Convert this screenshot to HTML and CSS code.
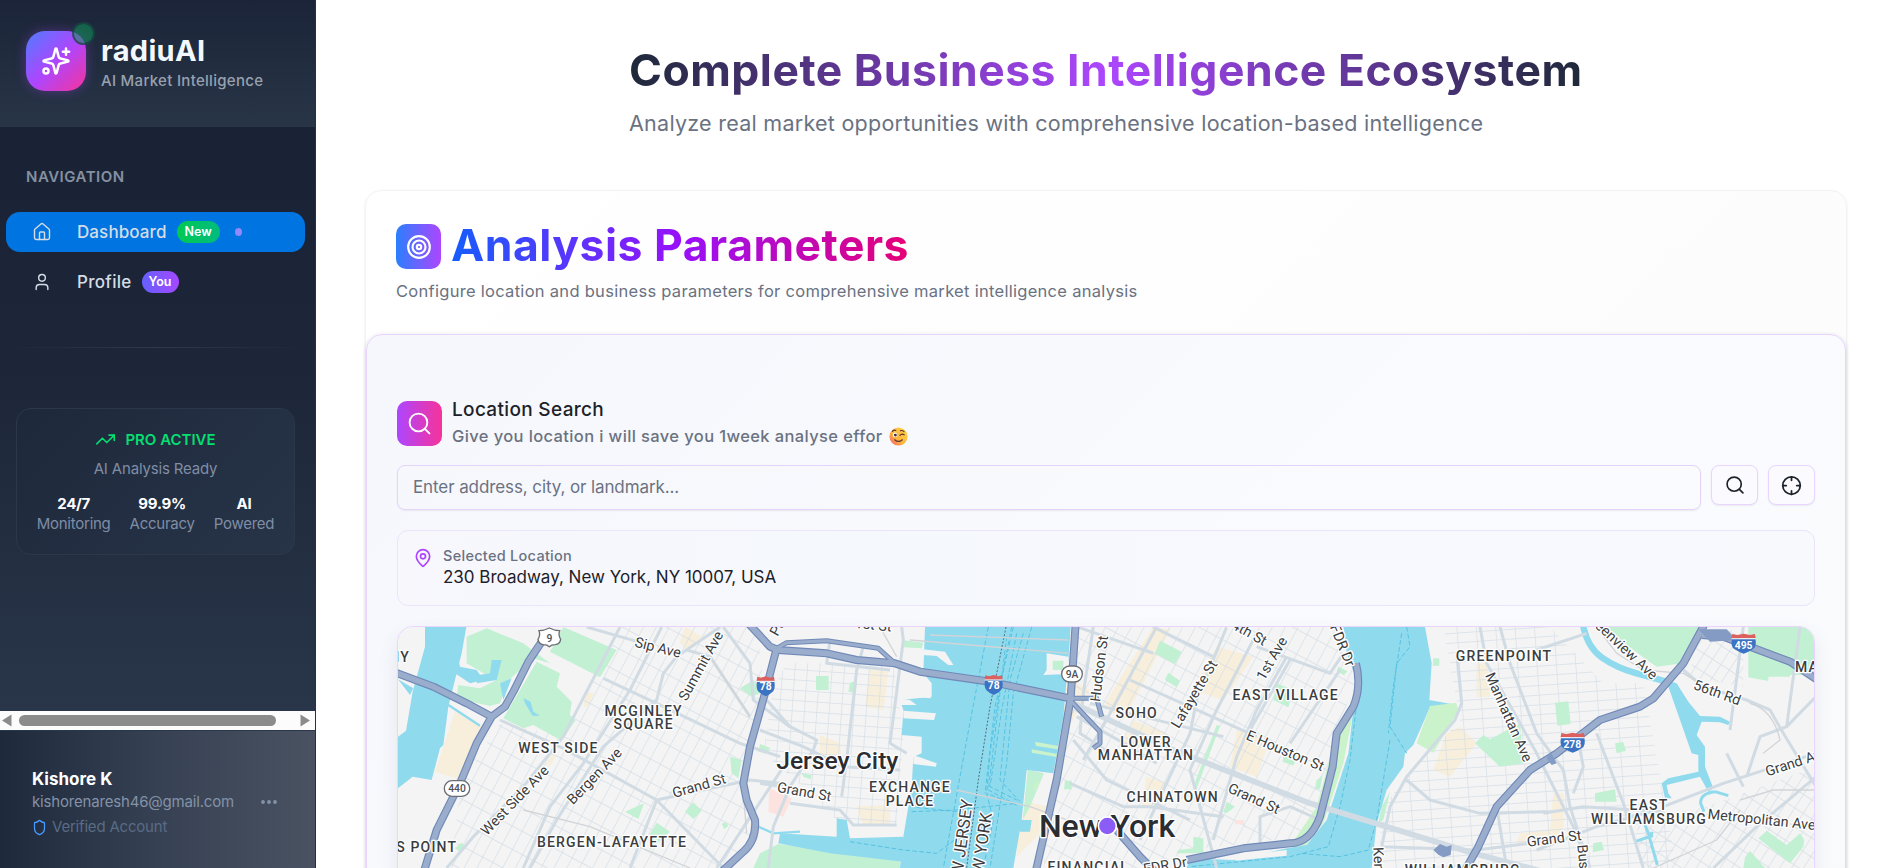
FILE: index.html
```
<!DOCTYPE html>
<html lang="en">
<head>
  <meta charset="UTF-8" />
  <meta name="viewport" content="width=device-width, initial-scale=1" />
  <title>radiuAI - Dashboard</title>
  <link rel="stylesheet" href="styles.css">
</head>
<body>

<aside class="sidebar">
  <div class="brand">
    <div class="brand-logo">
      <svg viewBox="0 0 24 24" width="30" height="30" class="icon"><path d="M9.937 15.5A2 2 0 0 0 8.5 14.063l-6.135-1.582a.5.5 0 0 1 0-.962L8.5 9.936A2 2 0 0 0 9.937 8.5l1.582-6.135a.5.5 0 0 1 .963 0L14.063 8.5A2 2 0 0 0 15.5 9.937l6.135 1.581a.5.5 0 0 1 0 .964L15.5 14.063a2 2 0 0 0-1.437 1.437l-1.582 6.135a.5.5 0 0 1-.963 0z"/><path d="M20 2v5M22.500 4.500h-5"/><circle cx="4" cy="20" r="2"/></svg>
      <span class="brand-status"></span>
    </div>
    <div>
      <div class="brand-name">radiuAI</div>
      <div class="brand-sub">AI Market Intelligence</div>
    </div>
  </div>

  <nav class="nav">
    <div class="nav-label">NAVIGATION</div>
    <a class="nav-item active">
      <svg viewBox="0 0 24 24" width="20" height="20" class="icon"><path d="M15 21v-8a1 1 0 0 0-1-1h-4a1 1 0 0 0-1 1v8"/><path d="M3 10a2 2 0 0 1 .709-1.528l7-5.999a2 2 0 0 1 2.582 0l7 5.999A2 2 0 0 1 21 10v9a2 2 0 0 1-2 2H5a2 2 0 0 1-2-2z"/></svg>
      <span class="nav-text">Dashboard</span>
      <span class="badge badge-new">New</span>
      <span class="nav-dot"></span>
    </a>
    <a class="nav-item">
      <svg viewBox="0 0 24 24" width="20" height="20" class="icon"><path d="M19 21v-2a4 4 0 0 0-4-4H9a4 4 0 0 0-4 4v2"/><circle cx="12" cy="7" r="4"/></svg>
      <span class="nav-text profile">Profile</span>
      <span class="badge badge-you">You</span>
    </a>
    <div class="nav-divider"></div>

    <div class="plan">
      <div class="plan-title">
        <svg viewBox="0 0 24 24" width="21" height="21" class="icon"><path d="M22 7l-8.5 8.5-5-5L2 17"/><path d="M16 7h6v6"/></svg>
        <span>PRO ACTIVE</span>
      </div>
      <div class="plan-sub">AI Analysis Ready</div>
      <div class="plan-stats">
        <div class="stat"><b>24/7</b><span>Monitoring</span></div>
        <div class="stat"><b>99.9%</b><span>Accuracy</span></div>
        <div class="stat"><b>AI</b><span>Powered</span></div>
      </div>
    </div>
  </nav>

  <div class="hscroll">
    <svg viewBox="0 0 10 12" width="10" height="13"><path d="M9.500 0v12L0 6z"/></svg>
    <div class="hscroll-thumb"></div>
    <svg viewBox="0 0 10 12" width="10" height="13"><path d="M.5 0v12L10 6z"/></svg>
  </div>

  <div class="account">
    <div>
      <div class="account-name">Kishore K</div>
      <div class="account-mail">kishorenaresh46@gmail.com</div>
      <div class="account-verified">
        <svg viewBox="0 0 24 24" width="15" height="17" class="icon" preserveAspectRatio="none"><path d="M20 13c0 5-3.500 7.500-7.660 8.950a1 1 0 0 1-.67-.01C7.500 20.500 4 18 4 13V6a1 1 0 0 1 1-1c2 0 4.500-1.200 6.240-2.720a1.170 1.170 0 0 1 1.520 0C14.510 3.810 17 5 19 5a1 1 0 0 1 1 1z"/></svg>
        <span>Verified Account</span>
      </div>
    </div>
    <svg viewBox="0 0 16 4" width="16" height="4" class="account-more"><circle cx="2" cy="2" r="1.900"/><circle cx="8" cy="2" r="1.900"/><circle cx="14" cy="2" r="1.900"/></svg>
  </div>
</aside>

<main class="main">
  <div class="hero">
    <h1 class="hero-title">Complete Business Intelligence Ecosystem</h1>
    <p class="hero-sub">Analyze real market opportunities with comprehensive location-based intelligence</p>
  </div>

  <section class="card">
    <div class="card-head">
      <div class="card-row">
        <div class="tile tile-blue">
          <svg viewBox="0 0 24 24" width="26" height="26" class="icon"><circle cx="12" cy="12" r="10"/><circle cx="12" cy="12" r="6"/><circle cx="12" cy="12" r="2"/></svg>
        </div>
        <h2 class="card-title">Analysis Parameters</h2>
      </div>
      <p class="card-desc">Configure location and business parameters for comprehensive market intelligence analysis</p>
    </div>

    <div class="panel">
      <div class="panel-head">
        <div class="tile tile-pink">
          <svg viewBox="0 0 24 24" width="25" height="25" class="icon"><circle cx="11" cy="11" r="8.500"/><path d="M21.500 21.500l-4.300-4.300"/></svg>
        </div>
        <div>
          <div class="panel-title">Location Search</div>
          <div class="panel-sub">
            <span>Give you location i will save you 1week analyse effor</span>
            <svg viewBox="0 0 20 20" width="19" height="19">
              <defs><linearGradient id="face" x1="1" y1="0" x2="0" y2="1"><stop offset="0" stop-color="#ffd84a"/><stop offset=".6" stop-color="#fdb33c"/><stop offset="1" stop-color="#f4556a"/></linearGradient></defs>
              <circle cx="10" cy="10" r="9.500" fill="url(#face)"/>
              <ellipse cx="6.300" cy="8.300" rx="2.300" ry="2.600" fill="#fff"/>
              <circle cx="6.700" cy="8.500" r="1.500" fill="#402a32"/>
              <path d="M11.500 8.800q2-2.400 4.500-.6M3.500 4.600q1.800-1.800 3.600-1M12 4q2-.8 3.800.8M6 13.400q4 3.600 8 0" fill="none" stroke="#5b3136" stroke-width="1.200" stroke-linecap="round"/>
            </svg>
          </div>
        </div>
      </div>

      <div class="search-row">
        <div class="search-input">Enter address, city, or landmark...</div>
        <button class="icon-btn"><svg viewBox="0 0 24 24" width="20" height="20" class="icon"><circle cx="11" cy="11" r="8.500"/><path d="M21.500 21.500l-4.300-4.300"/></svg></button>
        <button class="icon-btn"><svg viewBox="0 0 24 24" width="21" height="21" class="icon"><circle cx="12" cy="12" r="10"/><path d="M22 12h-4M6 12H2M12 6V2M12 22v-4"/></svg></button>
      </div>

      <div class="selected">
        <svg viewBox="0 0 24 24" width="20" height="20" class="icon"><path d="M20 10c0 4.993-5.539 10.193-7.399 11.799a1 1 0 0 1-1.202 0C9.539 20.193 4 14.993 4 10a8 8 0 0 1 16 0"/><circle cx="12" cy="10" r="3"/></svg>
        <div>
          <div class="selected-label">Selected Location</div>
          <div class="selected-value">230 Broadway, New York, NY 10007, USA</div>
        </div>
      </div>

      <div class="map">
        <svg class="map-svg" viewBox="24 21 4254 723" preserveAspectRatio="xMinYMin slice">
          <defs>
            <pattern id="grid-jc" width="34" height="62" patternUnits="userSpaceOnUse" patternTransform="rotate(28)"><path d="M0 0V62M0 0H34" class="minor"/></pattern>
            <pattern id="grid-dt" width="37" height="31" patternUnits="userSpaceOnUse" patternTransform="rotate(4)"><path d="M0 0V31M0 0H37" class="minor"/></pattern>
            <pattern id="grid-mn" width="34" height="66" patternUnits="userSpaceOnUse" patternTransform="rotate(28)"><path d="M0 0V66M0 0H34" class="minor"/></pattern>
            <pattern id="grid-gp" width="58" height="29" patternUnits="userSpaceOnUse" patternTransform="rotate(-4)"><path d="M0 0V29M0 0H58" class="minor"/></pattern>
            <pattern id="grid-wb" width="30" height="48" patternUnits="userSpaceOnUse" patternTransform="rotate(33)"><path d="M0 0V48M0 0H30" class="minor"/></pattern>
            <g id="interstate">
              <path d="M-26-14Q-30 10-20 18Q-10 27 0 31Q10 27 20 18Q30 10 26-14z" fill="#3b73c4"/>
              <path d="M-27-15L-25-28L-14-25L0-29L14-25L25-28L27-15z" fill="#db605e"/>
              <path d="M-27-14H27" stroke="#fff" stroke-width="3"/>
            </g>
            <g id="hw">
              <path d="M10 155L130 200L230 250L305 290M455 65L415 125L370 215L345 260L305 290L260 370L210 490L140 630L100 760"/>
              <path d="M1075 10L1140 80L1165 90L1310 100L1400 120L1515 130L1590 155L1800 185L2040 235"/>
              <path d="M1160 85L1125 220L1080 380L1060 490L1070 540L1095 600Q1100 660 1060 695L990 760"/>
              <path d="M2057 10L2042 235L2000 480L1936 760"/>
              <path d="M2898 130Q2915 200 2890 260L2840 340L2828 440L2790 590Q2760 670 2700 670L2560 685L2390 720M2180 630L2250 710L2300 760"/>
              <path d="M3945 10L3880 130L3790 235L3750 260L3630 300L3500 400L3420 450L3320 560L3265 680L3220 760"/>
              <path d="M3935 45L4000 50L4080 80L4200 125L4290 185"/>
            </g>
            <g id="ramps">
              <path d="M1160 85L1190 68L1310 62L1465 85L1515 130M2040 235L2120 235L2135 290M2045 245L2130 335L2130 370L2110 385"/>
            </g>
          </defs>
          <rect width="4300" height="760" fill="#f4f4f4"/>

          <!-- commercial blocks -->
          <g class="sand">
            <path d="M195 275L278 318L205 478L135 455L160 380z"/>
            <path d="M590 215L612 222L590 262L580 258zM485 400L497 408L478 442L468 436zM870 70L885 20L935 50L890 90z"/>
            <path d="M1440 150L1495 155L1480 270L1425 260zM1290 345L1350 370L1355 420L1290 400zM1400 560L1500 555L1500 610L1420 615z"/>
            <path d="M1910 545L1975 560L1950 640L1880 710L1885 650z"/>
            <path d="M2290 20L2340 30L2260 190L2200 300L2140 260L2200 160zM2480 80L2590 110L2500 240L2410 210zM2540 330L2640 360L2600 470L2520 440zM2230 300L2330 340L2300 400L2200 370zM2270 470L2330 490L2310 560L2255 560zM2040 180L2100 210L2030 330L2000 250z"/>
            <path d="M3170 340L3210 320L3260 370L3180 470L3130 450zM3260 130L3290 130L3300 230L3260 230zM3490 520L3520 520L3520 620L3480 680L3380 670L3390 640L3480 630z"/>
          </g>

          <!-- street grids -->
          <path fill="url(#grid-jc)" d="M690 20H1100L1125 230L1060 480L1090 660L980 744H180L215 480L330 310L530 350z"/>
          <path fill="url(#grid-dt)" d="M1190 130H1510L1540 350L1520 620L1350 610L1240 500L1120 400L1150 200z"/>
          <path fill="url(#grid-mn)" d="M2070 20H2830L2900 170L2840 340L2790 560L2740 650L2400 690L2290 744H1960L1990 480z"/>
          <path fill="url(#grid-gp)" d="M3160 20H3480L3640 190L3760 190L3860 744H2960L2980 560L3050 470L3210 300z"/>
          <path fill="url(#grid-wb)" d="M3740 600L3950 560L4278 440V744H3750zM3920 30H4060V200L3900 170z"/>

          <!-- parks -->
          <g class="park">
            <path d="M230 50L290 25L400 70L480 130L430 115L340 195L230 130z"/>
            <path d="M520 21L680 90L630 172L480 95z"/>
            <path d="M440 125L510 160L500 200L545 245L540 285L557 300L515 362L430 315L400 325L340 295z"/>
            <path d="M205 195L270 205L320 180L345 210L330 250L300 258L200 235z"/>
            <path d="M1050 205L1090 180L1120 215L1085 230zM1020 410L1055 420L1045 475L1025 460zM1110 372L1142 385L1125 400L1105 395zM705 575L762 550L745 597zM885 575L910 547L935 573L910 597zM775 650L800 608L840 635L780 690zM195 685L215 668L230 682L213 697zM995 612L1008 605L1015 618L1003 627z"/>
            <path d="M1278 168H1316V210H1278zM1380 188L1400 182L1398 220L1375 215zM1535 60L1600 68L1595 85L1540 82zM1090 744L1110 700L1165 672L1530 720V744z"/>
            <path d="M1913 450L1962 460L1920 560L1898 600zM2025 482L2045 482L2045 508H2022zM1235 460L1265 466L1262 478L1240 470z"/>
            <path d="M2310 62L2375 95L2355 132L2295 100zM2335 158L2370 182L2360 202L2325 180zM2660 190L2710 210L2695 262L2650 240zM2845 140L2872 154L2862 166L2840 154zM2780 480L2798 466L2790 508H2775zM2680 405L2715 425L2710 437L2678 425zM2480 315L2490 318L2420 505L2410 500zM2510 545L2535 560L2510 580L2500 575zM2410 650L2440 655V700H2360L2365 690L2410 685z"/>
            <path d="M2893 260L2860 430L2800 610L2740 685L2700 680L2780 560L2840 340z" fill="#caf2cb"/>
            <path d="M3000 515L2980 600L2965 610L2975 560zM3130 115H3148V137H3128zM3255 370L3280 345L3300 358L3390 310L3400 430L3330 440z"/>
            <path d="M3640 21H3930L3880 130L3800 140L3770 120zM3495 248L3535 244L3542 312L3502 317zM3675 370L3700 366L3708 392L3680 400zM3615 520L3675 508L3680 545L3615 545zM4075 21H4270L4278 60V165H4200V170H4135V183L4075 172zM4105 655L4130 632L4190 675L4230 640L4243 660L4240 680L4200 730zM4065 712L4080 692L4125 744H4060zM3610 670L3635 665L3642 690L3608 697z"/>
          </g>

          <!-- water -->
          <g class="water">
            <path d="M105 21H229L215 100L175 260L160 375L150 385L125 480L68 470L24 505V350L48 332L68 215L105 80z"/>
            <path d="M24 178L70 205L60 225zM185 110L205 118L210 140L260 150L280 180L240 190L180 150zM305 120H335L320 180L260 190L265 165L300 160zM400 235L422 245L430 275L450 287L428 287L405 250zM330 190L365 175L340 240z"/>
            <path d="M1605 21H2042L2036 110L2020 290L1990 460L1910 450L1895 600L1870 744H1530L1540 650L1565 500L1570 410L1595 400V350L1535 345L1540 270L1530 240L1625 230V190L1600 160z"/>
            <path d="M1170 640L1340 650V595L1370 600L1380 655L1540 650V725L1320 700L1165 670zM1885 600H1925L1920 635H1890z"/>
            <path d="M2860 21H3105L3125 130L3118 240L3200 255L3192 280L3120 262L3070 375L3045 400L3040 440L2990 510L2960 610L2945 744H2390L2400 715L2530 720L2690 685L2750 675L2810 600L2875 400L2900 180L2870 100z"/>
            <path d="M3828 180L3860 190L3895 245L3930 288L3990 290L4020 305L4015 315L3990 307L3935 305L3920 345L3945 380L3945 440L3970 505L3955 515L3930 470L3830 495L3835 520L3845 535L3825 535L3815 490L3835 475L3925 455L3925 405L3905 400z"/>
          </g>
          <g class="creek">
            <path d="M3578 10Q3590 80 3635 112T3740 160T3845 190" stroke-width="19"/>
            <path d="M3975 515Q3930 520 3932 550L3942 575M3975 515L4015 527M3765 615L3775 640L3802 735M3735 665L3785 648L3785 635" stroke-width="9"/>
            <path d="M175 255L270 317M1105 620L1150 640L1230 635" stroke-width="7"/>
          </g>
          <!-- piers -->
          <path fill="#f4f4f4" d="M1598 88L1665 95L1690 135L1675 135L1640 108L1600 105zM1540 272L1638 280L1632 300L1540 295zM1570 405L1640 430L1638 440L1570 432zM1600 170L1622 190V235L1585 232zM1520 235L1560 240L1580 255L1520 255zM2535 708L2690 690V707L2537 722zM1970 100L2035 110V162L1960 165L1970 150z"/>
          <path class="park" d="M1988 122H2020V150H1988z"/>
          <path fill="#caf2cb" d="M3120 258L3198 248L3206 272L3170 330L3130 398L3080 370zM1935 365L2005 378L2003 388L1938 378zM1925 388L2003 402L2003 412L1925 398zM1940 482L1950 488L1935 515L1930 500z"/>
          <path fill="#fde3e0" d="M1138 505L1205 535L1180 590L1135 575zM2535 600H2562V613H2535z"/>

          <!-- ferry routes -->
          <g class="ferry">
            <path d="M1795 21L1730 360L1660 744M1865 21L1830 200L1800 400L1790 520L1810 600L1780 744M1870 21L1815 260L1785 520M1880 40L1835 270L1800 500L1880 540M1900 40L1860 180L1830 480L1890 545M1925 21L1870 220L1850 430L1800 744"/>
            <path d="M1850 50L1795 510L1880 555L1790 520M1565 575L1700 570L1880 550M1380 665L1540 690L1640 700L1720 640M1560 560L1700 575"/>
            <path d="M3050 21L3060 80L3020 130L3000 320L3050 400M3035 40L3010 200L2995 340M2900 250L2880 420L2850 560L2815 680L2700 710L2400 740M3000 360L2960 600L2935 690L2850 710L2730 700"/>
          </g>
          <path class="border-line" d="M1848 21L1800 260L1765 480L1730 744"/>

          <!-- secondary roads -->
          <g class="road">
            <path d="M590 21L690 50L780 75M690 21L520 350L400 500L250 650L170 744M815 21L720 210L580 430L480 560L400 744M990 21L860 110L820 160L800 240L640 380L500 600L420 744"/>
            <path d="M330 300L520 385L800 540L1000 744M640 175L800 250L1050 370L1170 410M800 540L1080 480M980 744L1200 410M800 540L720 744M1000 21L1080 130L1090 240L1200 320M890 90L960 110L1080 290M1080 480L1170 490"/>
            <path d="M1320 60L1310 130L1410 140L1500 150M1535 21L1540 60L1500 370L1550 400M1420 80L1400 150L1370 420L1355 530M1110 330L1240 380L1360 440L1530 450M1130 240L1200 320L1280 360L1270 390L1200 500L1150 620L1135 744M1110 490L1180 500M1200 550L1350 570L1390 615L1520 615"/>
            <path d="M2060 20L2290 100M2290 21L2470 110M2100 250L2500 350M2220 180L2600 350M2050 360L2150 480L2400 600M2300 430L2220 380L2060 290M2600 80L2820 160L2860 100M2690 110L2600 270L2540 410L2470 660M2510 21L2420 240L2400 340L2250 660M2600 40L2480 270L2400 450L2480 744M2700 120L2580 330M2850 150L2700 370M2300 20L2160 280L2080 420M2110 21L2080 220L2070 340L2160 400"/>
            <path d="M2610 670L2610 590L2700 560L2790 600M2040 490L2200 560L2280 560L2500 590"/>
            <path d="M3270 21L3290 130L3440 400L3510 540L3560 640L3590 744M3330 21L3360 130L3440 340M3200 100L3215 250L3195 300L3050 470L3000 560L2975 680M3050 480L3120 540L3270 580L3470 575M2980 680L3260 690L3500 660M3320 560L3350 744M3440 340L3520 450L3540 560L3600 744M3620 340L3700 550L3760 744"/>
            <path d="M3820 560L4000 490L4278 400M3440 690L3620 620L3800 570M3460 580L3580 560L3820 575M3880 150L3940 200L4070 240L4140 270L4180 340L4278 500M4060 20L4020 330M4230 21L4190 320L4278 230M4190 320L4110 350L4070 470M4278 470L4100 620L3970 744M4010 400L4060 500M3440 90L3590 40M3560 340L3580 440L3550 520"/>
          </g>
          <path class="road wide" d="M2050 250L2350 390L2760 550L3250 700L3480 760"/>
          <path class="rail" d="M960 110L1080 290M1060 520L1070 640M400 570L600 620L900 744M3620 21L3680 100L3760 150L3880 160L3930 190M4080 250Q4150 270 4170 360L4120 400M4050 540L4150 510L4278 510M3790 744L3980 660L4050 570M1560 60L2040 100M1620 45L2035 60M1700 510L1920 560L2060 610M1470 21L1520 110"/>

          <!-- highways -->
          <use href="#ramps" class="ramp-edge"/>
          <use href="#hw" class="hw-edge"/>
          <use href="#ramps" class="ramp-fill"/>
          <use href="#hw" class="hw-fill"/>
          <path fill="#849bc3" d="M3130 690L3150 672L3170 680L3185 675L3182 705L3160 712L3145 704zM3925 28H4010L4040 60L3960 65zM3470 415L3482 395L3500 430L3485 435z"/>

          <!-- shields -->
          <use href="#interstate" x="1127" y="198"/><use href="#interstate" x="1811" y="194"/>
          <use href="#interstate" transform="translate(3548 367) scale(1.35 1)"/><use href="#interstate" transform="translate(4061 70) scale(1.35 1)"/>
          <g fill="#fff" stroke="#6b6f74" stroke-width="4">
            <path d="M447 32Q462 32 478 24Q494 32 509 32Q504 45 512 58Q510 72 496 74Q484 74 478 80Q472 74 460 74Q446 72 444 58Q452 45 447 32z"/>
            <rect x="163" y="482" width="76" height="47" rx="23"/>
            <rect x="2015" y="138" width="62" height="48" rx="24"/>
          </g>
          <g class="shield-text">
            <text x="478" y="65">9</text><text x="201" y="517">440</text><text x="2046" y="174">9A</text>
            <g fill="#fff" font-weight="700"><text x="1127" y="211">78</text><text x="1811" y="207">78</text><text x="3547" y="383">278</text><text x="4061" y="86">495</text></g>
          </g>

          <!-- labels -->
          <g class="area">
            <text x="-2" y="125" class="start">NY</text>
            <text x="761" y="287">MCGINLEY</text><text x="761" y="327">SQUARE</text>
            <text x="505" y="398">WEST SIDE</text><text x="666" y="680">BERGEN-LAFAYETTE</text>
            <text x="110" y="697">S POINT</text>
            <text x="1560" y="516">EXCHANGE</text><text x="1560" y="558">PLACE</text>
            <text x="2240" y="293">SOHO</text><text x="2268" y="380">LOWER</text><text x="2268" y="420">MANHATTAN</text>
            <text x="2348" y="545">CHINATOWN</text><text x="2687" y="239">EAST VILLAGE</text>
            <text x="2095" y="757">FINANCIAL</text><text x="3218" y="765">WILLIAMSBURG</text>
            <text x="3342" y="122">GREENPOINT</text>
            <text x="3777" y="571">EAST</text><text x="3777" y="612">WILLIAMSBURG</text>
            <text x="4215" y="155" class="start">MASPETH</text>
          </g>
          <g class="street">
            <text transform="translate(804 82) rotate(14)">Sip Ave</text>
            <text transform="translate(932 137) rotate(-61)">Summit Ave</text>
            <text transform="translate(374 541) rotate(-46)">West Side Ave</text>
            <text transform="translate(613 468) rotate(-46)">Bergen Ave</text>
            <text transform="translate(927 497) rotate(-16)">Grand St</text>
            <text transform="translate(1243 515) rotate(10)">Grand St</text>
            <text transform="translate(1450 14) rotate(6)">1st St</text>
            <text transform="translate(1162 22) rotate(-60)">Pa</text>
            <text transform="translate(2127 146) rotate(-83)">Hudson St</text>
            <text transform="translate(2412 222) rotate(-59)">Lafayette St</text>
            <text transform="translate(2568 32) rotate(29)">14th St</text>
            <text transform="translate(2645 115) rotate(-60)">1st Ave</text>
            <text transform="translate(2858 76) rotate(68)">FDR Dr</text>
            <text transform="translate(2686 392) rotate(23)">E Houston St</text>
            <text transform="translate(2592 535) rotate(24)">Grand St</text>
            <text transform="translate(2325 736) rotate(-10)">FDR Dr</text>
            <text transform="translate(3357 291) rotate(66)">Manhattan Ave</text>
            <text transform="translate(3694 75) rotate(43)">Greenview Ave</text>
            <text transform="translate(3982 217) rotate(20)">56th Rd</text>
            <text transform="translate(4220 425) rotate(-18)">Grand Ave</text>
            <text transform="translate(4115 598) rotate(6)">Metropolitan Ave</text>
            <text transform="translate(3492 655) rotate(-7)">Grand St</text>
            <text transform="translate(2968 765) rotate(88)">Kent Ave</text>
            <text transform="translate(3585 765) rotate(85)">Bushwick</text>
            <text class="state" transform="translate(1712 685) rotate(-82)">NEW JERSEY</text>
            <text class="state" transform="translate(1772 700) rotate(-82)">NEW YORK</text>
          </g>
          <text class="city" x="1342" y="448" font-size="74">Jersey City</text>
          <text class="city" x="2151" y="652" font-size="96">New York</text>
          <circle cx="2152" cy="618" r="27" fill="#8b5cf6" stroke="#fff" stroke-width="5"/>
        </svg>
      </div>
    </div>
  </section>
</main>

</body>
</html>
```
FILE: styles.css
```
* {
  box-sizing: border-box;
}

body {
  margin: 0;
  display: flex;
  height: 868px;
  overflow: hidden;
  background: #fff;
  font-family: Inter, 'Liberation Sans', sans-serif;
  color: #1d2129;
}

h1, h2, p {
  margin: 0;
}

.icon {
  fill: none;
  stroke: currentColor;
  stroke-width: 2;
  stroke-linecap: round;
  stroke-linejoin: round;
  flex-shrink: 0;
}

/* sidebar */
.sidebar {
  width: 316px;
  height: 868px;
  flex-shrink: 0;
  display: flex;
  flex-direction: column;
  background: linear-gradient(#182033, #1d2739 45%, #293649 82%);
  border-right: 1px solid #22304a;
}

.brand {
  height: 127px;
  padding: 31px 26px 0;
  display: flex;
  align-items: flex-start;
  gap: 15px;
  background: linear-gradient(#1b2438, #283547);
  border-bottom: 1px solid #2a374b;
  white-space: nowrap;
}

.brand-logo {
  position: relative;
  width: 60px;
  height: 60px;
  display: flex;
  align-items: center;
  justify-content: center;
  color: #fff;
  border-radius: 19px;
  background: linear-gradient(135deg, #4f7dff, #ad46ff 50%, #f6339a);
  box-shadow: 0 0 12px rgba(173, 70, 255, 0.35);
}

.brand-status {
  position: absolute;
  top: -9px;
  right: -9px;
  width: 23px;
  height: 23px;
  border: 2px solid rgba(24, 32, 51, 0.5);
  border-radius: 50%;
  background: rgba(16, 150, 90, 0.55);
}

.brand-name {
  margin-top: 2px;
  font-size: 29px;
  line-height: 36px;
  font-weight: 700;
  letter-spacing: 0.300px;
  color: #f3f8ff;
}

.brand-sub {
  margin-top: 2px;
  font-size: 15px;
  line-height: 20px;
  font-weight: 500;
  letter-spacing: 0.300px;
  color: #99a1af;
}

.nav {
  flex: 1;
  padding: 40px 10px 0 6px;
}

.nav-label {
  margin: 0 0 25px 20px;
  font-size: 15px;
  line-height: 20px;
  font-weight: 600;
  letter-spacing: 0.500px;
  color: #8590a1;
}

.nav-item {
  height: 40px;
  margin-bottom: 10px;
  padding-left: 26px;
  display: flex;
  align-items: center;
  border-radius: 14px;
  color: #d5dce5;
}

.nav-item .icon {
  stroke-width: 1.700;
}

.nav-item.active {
  background: #0075e2;
}

.nav-text {
  margin-left: 25px;
  font-size: 17px;
  font-weight: 550;
  letter-spacing: 0.100px;
}

.nav-text.profile {
  letter-spacing: 0.300px;
}

.badge {
  height: 22px;
  margin-left: 10px;
  padding: 0 8px;
  border-radius: 11px;
  font-size: 12.500px;
  line-height: 22px;
  font-weight: 600;
  color: #fff;
}

.badge-new {
  background: linear-gradient(90deg, #00c951, #00bb80);
}

.badge-you {
  padding: 0 7px;
  background: linear-gradient(90deg, #6560ff, #a448ff);
}

.nav-dot {
  width: 7px;
  height: 8px;
  margin-left: 15px;
  border-radius: 50%;
  background: #9388ff;
}

.nav-divider {
  height: 1px;
  margin: 45px 0 60px;
  background: linear-gradient(90deg, transparent, #2d3a4d 50%, transparent);
}

.plan {
  width: 279px;
  height: 147px;
  margin-left: 10px;
  padding-top: 20px;
  border: 1px solid #2b384b;
  border-radius: 15px;
  background: linear-gradient(135deg, #1e283b, #273448);
  text-align: center;
  font-size: 15px;
  line-height: 20px;
  color: #7f8da5;
}

.plan-title {
  display: flex;
  align-items: center;
  justify-content: center;
  gap: 9px;
  margin-bottom: 9px;
  font-weight: 600;
  color: #05df72;
}

.plan-title .icon {
  stroke-width: 1.800;
}

.plan-sub {
  letter-spacing: -0.170px;
}

.plan-stats {
  display: flex;
  justify-content: center;
  gap: 19px;
  margin-top: 15px;
  letter-spacing: -0.250px;
}

.stat {
  display: flex;
  flex-direction: column;
  align-items: center;
}

.stat b {
  color: #fff;
}

.hscroll {
  height: 19px;
  padding: 0 5px 0 2px;
  display: flex;
  align-items: center;
  gap: 7px;
  background: #fcfcfc;
  fill: #8b8b8b;
}

.hscroll-thumb {
  width: 257px;
  height: 11px;
  margin-right: 17px;
  border-radius: 6px;
  background: #8b8b8b;
}

.account {
  height: 138px;
  padding: 36px 0 0 32px;
  display: flex;
  align-items: flex-start;
  border-top: 1px solid #2a374b;
  background: linear-gradient(90deg, #1e293b, #364153 50%, #4a5262);
}

.account-name {
  font-size: 17px;
  line-height: 24px;
  font-weight: 700;
  color: #fff;
}

.account-mail {
  margin-top: 1px;
  font-size: 15px;
  line-height: 20px;
  letter-spacing: -0.180px;
  color: #8492a8;
}

.account-verified {
  margin-top: 5px;
  display: flex;
  align-items: center;
  gap: 5px;
  font-size: 15px;
  line-height: 20px;
  letter-spacing: -0.200px;
  color: #5a6b85;
}

.account-verified .icon {
  color: #4a9bff;
}

.account-more {
  margin: 33px 0 0 27px;
  fill: #8492a8;
}

/* main column */
.main {
  flex: 1;
  min-width: 0;
  height: 868px;
  padding: 43px 46px 0 49px;
  overflow: hidden;
}

.hero {
  width: 954px;
  margin: 0 auto 52px;
  white-space: nowrap;
}

.hero-title {
  font-size: 44.500px;
  line-height: 54px;
  font-weight: 700;
  letter-spacing: 0.500px;
  color: transparent;
  background: linear-gradient(90deg, #1e2939, #ad46ff 50%, #1e2939);
  -webkit-background-clip: text;
  background-clip: text;
}

.hero-sub {
  margin-top: 11px;
  font-size: 21.500px;
  line-height: 30px;
  letter-spacing: 0.260px;
  color: #6a7282;
}

.card {
  height: 900px;
  border: 1px solid #f3f3f6;
  border-radius: 16px;
  background: linear-gradient(135deg, #fff, #fbfbfb);
  box-shadow: 0 1px 3px rgba(0, 0, 0, 0.08);
}

.card-head {
  padding: 33px 30px 31px;
}

.card-row,
.panel-head {
  display: flex;
  align-items: center;
  gap: 10px;
}

.card-row {
  height: 45px;
}

.tile {
  width: 45px;
  height: 45px;
  display: flex;
  align-items: center;
  justify-content: center;
  border-radius: 10px;
  color: #fff;
}

.tile-blue {
  background: linear-gradient(90deg, #2b7fff, #ad46ff);
}

.tile-pink {
  background: linear-gradient(90deg, #ad46ff, #f6339a);
}

.tile-pink .icon {
  stroke-width: 1.800;
}

.card-title {
  margin-top: -3px;
  font-size: 44.500px;
  line-height: 54px;
  font-weight: 700;
  letter-spacing: 0.500px;
  white-space: nowrap;
  color: transparent;
  background: linear-gradient(90deg, #155dfc, #9810fa 50%, #e60076);
  -webkit-background-clip: text;
  background-clip: text;
}

.card-desc {
  margin-top: 10px;
  font-size: 16.500px;
  line-height: 24px;
  letter-spacing: 0.290px;
  color: #6a7282;
}

.panel {
  height: 700px;
  padding: 61px 30px 0;
  border: 1px solid #e9d5ff;
  border-radius: 16px;
  background: linear-gradient(135deg, #f6f7fc, #fafbfe 60%, #f8fafc);
  box-shadow: 0 1px 4px rgba(0, 0, 0, 0.15);
}

.panel-title {
  font-size: 19px;
  line-height: 27px;
  font-weight: 500;
  letter-spacing: 0.330px;
}

.panel-sub {
  display: flex;
  align-items: center;
  gap: 6px;
  font-size: 16.500px;
  line-height: 27px;
  font-weight: 460;
  letter-spacing: 0.380px;
  color: #6a7282;
}

.search-row {
  display: flex;
  align-items: flex-start;
  gap: 10px;
  margin-top: 15px;
}

.search-input {
  flex: 1;
  height: 45px;
  padding-left: 15px;
  border: 1px solid #e4d4fb;
  border-radius: 8px;
  box-shadow: 0 1px 2px rgba(0, 0, 0, 0.07);
  font-size: 17px;
  line-height: 43px;
  letter-spacing: -0.100px;
  color: #6a7282;
}

.icon-btn {
  width: 47px;
  height: 40px;
  padding: 0;
  display: flex;
  align-items: center;
  justify-content: center;
  border: 1px solid #e9d5ff;
  border-radius: 8px;
  background: #fbfbff;
  box-shadow: 0 1px 2px rgba(0, 0, 0, 0.07);
  color: #1d2129;
}

.selected {
  height: 76px;
  margin-top: 20px;
  padding: 14px 15px;
  display: flex;
  gap: 10px;
  border: 1px solid #ebe4fb;
  border-radius: 11px;
  background: linear-gradient(90deg, #f7f7fc, #f5f8fd 30%, #f8f9fd);
}

.selected .icon {
  margin: 3px 0 0;
  color: #ad46ff;
}

.selected-label {
  font-size: 14.500px;
  line-height: 22px;
  font-weight: 460;
  letter-spacing: 0.280px;
  color: #6a7282;
}

.selected-value {
  font-size: 17px;
  line-height: 20px;
}

.map {
  height: 420px;
  margin-top: 20px;
  border: 1px solid #e9d5ff;
  border-radius: 16px;
  overflow: hidden;
  background: #f4f4f4;
  box-shadow: 0 8px 18px rgba(80, 80, 120, 0.1);
}

.map-svg {
  display: block;
  width: 100%;
  height: 241px;
  font-family: Roboto, sans-serif;
}

.minor {
  fill: none;
  stroke: #d5dee6;
  stroke-width: 4;
}

.sand {
  fill: #f7eedb;
}

.park {
  fill: #c2f0d3;
}

.water {
  fill: #90daee;
}

.creek {
  fill: none;
  stroke: #90daee;
}

.ferry {
  fill: none;
  stroke: #55c3e0;
  stroke-width: 3;
  stroke-dasharray: 14 7;
}

.border-line {
  fill: none;
  stroke: #4b6f7d;
  stroke-width: 3;
  stroke-dasharray: 6 5;
}

.road {
  fill: none;
  stroke: #d1dbe3;
  stroke-width: 9;
  stroke-linejoin: round;
}

.road.wide {
  stroke-width: 17;
}

.rail {
  fill: none;
  stroke: #d2d4d8;
  stroke-width: 4;
}

.hw-edge,
.hw-fill,
.ramp-edge,
.ramp-fill {
  fill: none;
  stroke: #7089b7;
  stroke-width: 24;
  stroke-linejoin: round;
}

.hw-fill {
  stroke: #9aadcd;
  stroke-width: 17;
}

.ramp-edge {
  stroke-width: 15;
}

.ramp-fill {
  stroke: #9aadcd;
  stroke-width: 9;
}

.shield-text {
  font-size: 31px;
  font-weight: 500;
  text-anchor: middle;
  fill: #4c5056;
}

.area,
.street,
.city {
  text-anchor: middle;
  fill: #3b3d40;
  stroke: #fff;
  stroke-width: 8;
  stroke-linejoin: round;
  paint-order: stroke;
}

.area {
  font-size: 42px;
  font-weight: 500;
  letter-spacing: 3.500px;
}

.area .start {
  text-anchor: start;
}

.street {
  font-size: 43px;
}

.street text {
  dominant-baseline: central;
}

.street .state {
  font-size: 50px;
}

.city {
  font-weight: 500;
  fill: #2b2d30;
}
```
